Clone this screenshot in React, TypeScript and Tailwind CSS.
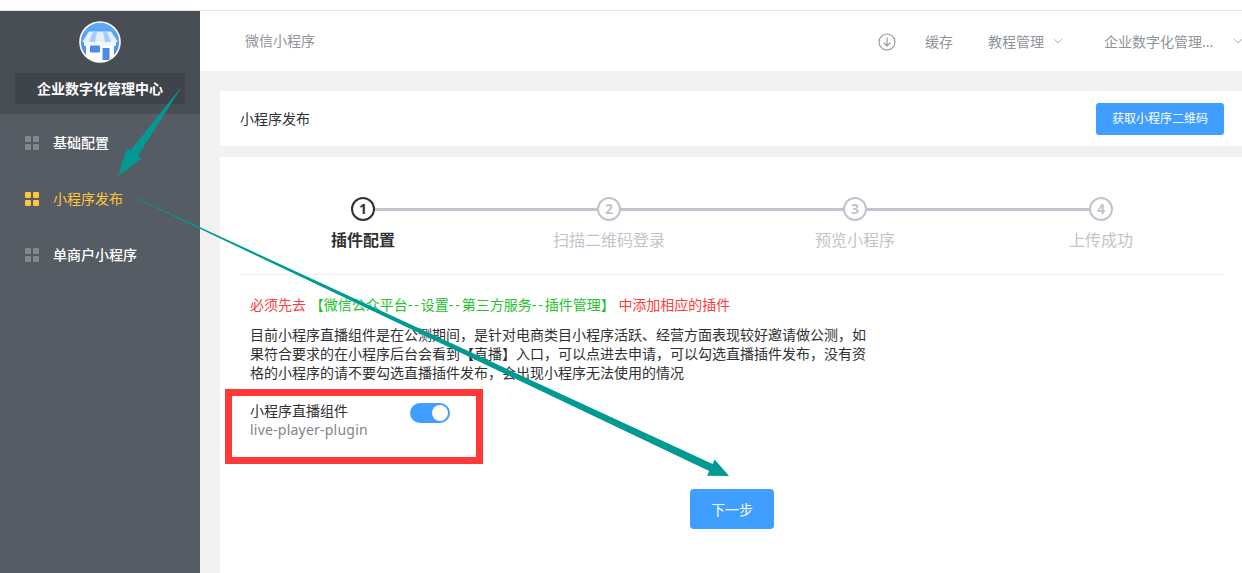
const cjk = "font-['Noto_Sans','Noto_Sans_CJK_SC',sans-serif]";

function arrow(x1: number, y1: number, x2: number, y2: number, headLen: number, headHalf: number, shaftHalf: number, startHalf: number) {
  const dx = x2 - x1, dy = y2 - y1;
  const len = Math.hypot(dx, dy);
  const ux = dx / len, uy = dy / len, nx = -uy, ny = ux;
  const bx = x2 - ux * headLen, by = y2 - uy * headLen;
  const pt = (x: number, y: number) => `${x.toFixed(1)},${y.toFixed(1)}`;
  return [
    pt(x1 + nx * startHalf, y1 + ny * startHalf),
    pt(bx + nx * shaftHalf, by + ny * shaftHalf),
    pt(bx + nx * headHalf, by + ny * headHalf),
    pt(x2, y2),
    pt(bx - nx * headHalf, by - ny * headHalf),
    pt(bx - nx * shaftHalf, by - ny * shaftHalf),
    pt(x1 - nx * startHalf, y1 - ny * startHalf),
  ].join(" ");
}

function Grid({ active }: { active?: boolean }) {
  const c = active ? "bg-[#ffc53d]" : "bg-[#85888c]";
  return (
    <span className="grid grid-cols-2 gap-[2px] w-[14px] h-[14px] shrink-0">
      <i className={`${c} rounded-[1px]`} />
      <i className={`${c} rounded-[1px]`} />
      <i className={`${c} rounded-[1px]`} />
      <i className={`${c} rounded-[1px]`} />
    </span>
  );
}

function Logo() {
  return (
    <svg width="42" height="42" viewBox="0 0 42 42">
      <defs>
        <linearGradient id="lg" x1="0" y1="0" x2="0" y2="1">
          <stop offset="0" stopColor="#60aefb" />
          <stop offset="1" stopColor="#4a86e8" />
        </linearGradient>
      </defs>
      <circle cx="21" cy="21" r="20" fill="url(#lg)" stroke="#fff" strokeWidth="1.6" />
      <path d="M10 10.5H32L39 21H3Z" fill="#e6effc" />
      <path d="M14 10.5L10 21H16L18 10.5ZM24 10.5L26 21H32L28 10.5Z" fill="#a9cdf8" />
      <path d="M5 21H37V24C37 25 35 25.5 33 25.5H9C7 25.5 5 25 5 24Z" fill="#f2f6fd" />
      <path d="M7 25H35V35.5C31 39 26 40.4 21 40.4C16 40.4 11 39 7 35.5Z" fill="#fff" />
      <rect x="11" y="24.5" width="10" height="7" rx="1.2" fill="#4f8be6" />
      <rect x="23.5" y="27" width="7" height="12" fill="#4f8be6" />
    </svg>
  );
}

function Chevron() {
  return (
    <svg width="10" height="6" viewBox="0 0 10 6" fill="none" stroke="#a9b4c4" strokeWidth="1" className="shrink-0">
      <path d="M.8.8L5 5l4.2-4.2" />
    </svg>
  );
}

function Step({ n, title, active, last }: { n: number; title: string; active?: boolean; last?: boolean }) {
  return (
    <div className="relative flex flex-col items-center">
      {!last && <div className="absolute left-1/2 w-full top-[11px] h-[3px] bg-[#c0c4cc]" />}
      <div
        className={`relative z-10 w-[24px] h-[24px] rounded-full bg-white border-2 flex items-center justify-center text-[14px] leading-none font-bold ${
          active ? "border-[#303133] text-[#303133]" : "border-[#c0c4cc] text-[#c0c4cc]"
        }`}
      >
        {n}
      </div>
      <div className={`mt-[7px] text-[16px] leading-[24px] ${active ? "font-bold text-[#303133]" : "text-[#c0c4cc]"}`}>{title}</div>
    </div>
  );
}

function Dash() {
  return <span className="tracking-[2px]">--</span>;
}

export default function App() {
  return (
    <div className={`${cjk} relative w-[1242px] h-[573px] overflow-hidden bg-white`}>
      <div className="h-[11px] bg-white border-b border-[#e2e2e2]" />
      <div className="flex h-[562px]">
        <aside className="w-[200px] shrink-0 bg-[#565c63] flex flex-col">
          <div className="h-[103px] bg-[#494e55] flex flex-col items-center pt-[10px]">
            <Logo />
            <div className="mt-[10px] w-[170px] h-[31px] rounded-[3px] bg-[#3f434a] text-white font-bold text-[14px] leading-[31px] text-center">
              企业数字化管理中心
            </div>
          </div>
          <nav className="flex flex-col pt-[1px]">
            {[
              ["基础配置", false],
              ["小程序发布", true],
              ["单商户小程序", false],
            ].map(([t, a]) => (
              <div key={t as string} className={`h-[56px] flex items-center pl-[25px] gap-[14px] text-[14px] ${a ? "text-[#ffc53d]" : "text-white font-medium"}`}>
                <Grid active={a as boolean} />
                <span className="-mt-[2px]">{t}</span>
              </div>
            ))}
          </nav>
        </aside>
        <main className="flex-1 min-w-0 bg-[#f2f2f2] flex flex-col">
          <header className="h-[60px] shrink-0 bg-white flex items-center pl-[45px] text-[14px] text-[#909399] whitespace-nowrap">
            <span className="flex-1 -mt-[2px]">微信小程序</span>
            <svg width="18" height="18" viewBox="0 0 18 18" fill="none" stroke="#909399" strokeWidth="1.1" className="shrink-0 mt-[2px] ml-[1px]">
              <circle cx="9" cy="9" r="8" />
              <path d="M9 4.5V13M5.6 9.6L9 13l3.4-3.4" />
            </svg>
            <span className="ml-[29px]">缓存</span>
            <span className="ml-[35px]">教程管理</span>
            <span className="ml-[9px] mr-[41px]"><Chevron /></span>
            <span className="w-[110px] shrink-0">企业数字化管理...</span>
            <span className="ml-[19px] mr-[-1px]"><Chevron /></span>
          </header>
          <div className="pt-[20px] pl-[20px] flex flex-col flex-1 min-h-0">
            <section className="h-[56px] shrink-0 bg-white border-b border-[#eeeef3] flex items-center justify-between pl-[20px] pr-[18px]">
              <span className="text-[14px] text-[#303133]">小程序发布</span>
              <button className="w-[128px] h-[32px] rounded-[3px] bg-[#409eff] text-white text-[12px]">获取小程序二维码</button>
            </section>
            <section className="mt-[10px] flex-1 bg-white px-[20px] pb-[10px] pr-[18px] pt-[40px]">
              <div className="grid grid-cols-4 pb-[22px] border-b border-[#eeeef3] h-[78px]">
                <Step n={1} title="插件配置" active />
                <Step n={2} title="扫描二维码登录" />
                <Step n={3} title="预览小程序" />
                <Step n={4} title="上传成功" last />
              </div>
              <div className="pl-[10px] pt-[20px]">
                <p className="text-[14px] leading-[20px] whitespace-nowrap">
                  <span className="text-[#ff3b3b]">必须先去</span>{" "}
                  <span className="text-[#22c42a]">【微信公众平台<Dash />设置<Dash />第三方服务<Dash />插件管理】</span>{" "}
                  <span className="text-[#ff3b3b]">中添加相应的插件</span>
                </p>
                <p className="mt-[10px] w-[624px] text-[14px] leading-[19px] text-[#303133]">
                  目前小程序直播组件是在公测期间，是针对电商类目小程序活跃、经营方面表现较好邀请做公测，如果符合要求的在小程序后台会看到【直播】入口，可以点进去申请，可以勾选直播插件发布，没有资格的小程序的请不要勾选直播插件发布，会出现小程序无法使用的情况
                </p>
                <div className="mt-[21px] flex items-start">
                  <div className="w-[160px] -mt-[2px]">
                    <div className="text-[14px] leading-[19px] text-[#303133]">小程序直播组件</div>
                    <div className="text-[14px] leading-[19px] text-[#7f858c] tracking-[0.22px]">live-player-plugin</div>
                  </div>
                  <div className="w-[40px] h-[20px] rounded-full bg-[#409eff] flex items-center justify-end pr-[2px]">
                    <span className="w-[16px] h-[16px] rounded-full bg-white" />
                  </div>
                </div>
                <div className="flex justify-center w-[964px] mt-[50px]">
                  <button className="w-[84px] h-[40px] rounded-[4px] bg-[#409eff] text-white text-[14px]">下一步</button>
                </div>
              </div>
            </section>
          </div>
        </main>
      </div>
      <div className="absolute left-[225px] top-[389px] w-[258px] h-[75px] border-[7px] border-[#ff3838] pointer-events-none" />
      <svg className="absolute left-0 top-0 pointer-events-none" width="1242" height="573" viewBox="0 0 1242 573">
        <polygon points={arrow(180, 89, 118, 176, 28, 9, 4.5, 0.3)} fill="#009a94" />
        <polygon points={arrow(136, 198, 729, 476, 20, 9, 4, 0.3)} fill="#009a94" />
      </svg>
    </div>
  );
}
